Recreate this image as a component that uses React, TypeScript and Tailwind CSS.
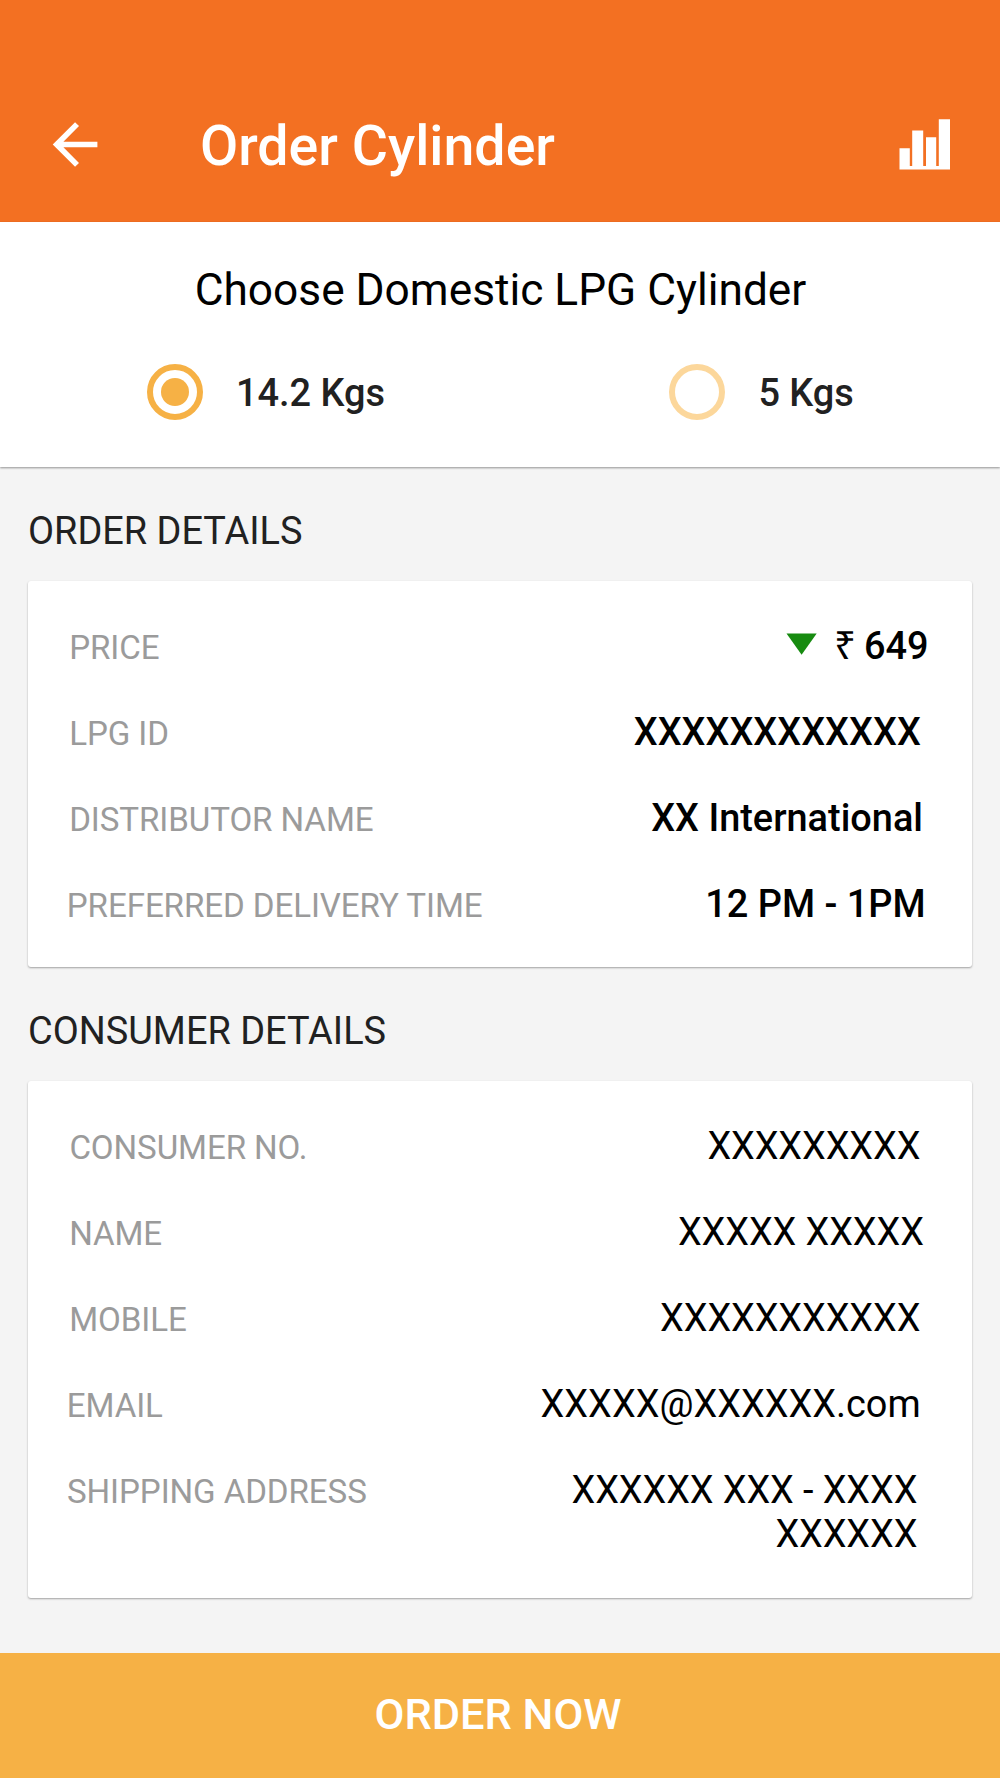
import { useState } from 'react';

const sizes = ['14.2 Kgs', '5 Kgs'];

// the address goes over two lines, everything else is one
const consumerRows = [
  { label: 'CONSUMER NO.', lines: ['XXXXXXXXX'], className: 'pl-[41.4px] pr-[51.7px] tracking-[-0.1px]' },
  { label: 'NAME', lines: ['XXXXX XXXXX'], className: 'pl-[41.2px] pr-[48.2px] tracking-[-0.1px]' },
  { label: 'MOBILE', lines: ['XXXXXXXXXXX'], className: 'pl-[41.2px] pr-[51.7px] tracking-[-0.1px]' },
  { label: 'EMAIL', lines: ['XXXXX@XXXXXX.com'], className: 'pl-[38.8px] pr-[51.4px]' },
  { label: 'SHIPPING ADDRESS', lines: ['XXXXXX XXX - XXXX', 'XXXXXX'], className: 'pl-[39px] pr-[54.7px] tracking-[-0.1px]' },
]

const BackArrow = () => (
  <svg className="w-[67px] h-[67px]" viewBox="-0.2 0 24 24" fill="currentColor">
    <path d="M20 11H7.83l5.59-5.59L12 4l-8 8 8 8 1.41-1.41L7.83 13H20v-2z" />
  </svg>
)

const BarsIcon = () => (
  <svg className="w-[51px] h-[51px]" viewBox="0 0 51 51" fill="currentColor">
    <path d="M.5 29.2h10.3V47h2.4V11.4h11V47H27V18.3h10.2V47h2.6V.3H51v50.3H.5z" />
  </svg>
)

const Row = ({ label, className, children }: { label: string, className: string, children: React.ReactNode }) => {
  return (
    <div className={`flex justify-between h-[86px] ${className}`}>
      <div className="pt-6 text-[33.15px] leading-[43px] tracking-[-0.1px] font-normal text-[#9b9b9b] whitespace-nowrap">{label}</div>
      <div className="pt-[22px] text-right text-[37.9px] leading-[44px] text-black whitespace-nowrap">{children}</div>
    </div>
  )
}

const Card = ({ title, className, children }: { title: string, className: string, children: React.ReactNode }) => {
  return (
    <section className="px-7">
      <h2 className="h-[114px] pt-[42px] text-[37.9px] leading-[44px] text-[#212121]">{title}</h2>
      <div className={`pt-[21px] bg-white rounded-[3px] shadow-[0_1px_2px_rgba(0,0,0,0.34)] ${className}`}>
        {children}
      </div>
    </section>
  )
}

const App = () => {

  const [size, setSize] = useState(sizes[0]);

  return (
    <div className="w-[1000px] h-[1778px] flex flex-col overflow-hidden bg-[#f4f4f4] font-['Roboto',sans-serif]">

      {/* app bar */}
      <header className="h-[222px] shrink-0 pt-[70px] pl-[41px] pr-[50px] flex items-center bg-[#f37022] text-white">
        <div className="-mt-[3px]"><BackArrow /></div>
        <h1 className="ml-[92px] pt-0.5 flex-1 text-[55.5px] leading-[66px] font-medium">Order Cylinder</h1>
        <div className="-mt-[3px]"><BarsIcon /></div>
      </header>

      {/* cylinder size */}
      <section className="h-[245px] shrink-0 pt-[42px] bg-white shadow-[0_1px_2px_rgba(0,0,0,0.4)]">
        <h2 className="pl-px text-center text-[44.25px] leading-[53px] text-black">Choose Domestic LPG Cylinder</h2>
        <div className="flex mt-[47px] pl-[147px]">
          {
            sizes.map((theSize) => {
              const active = theSize == size
              return (
                <div key={theSize} className="w-[522.4px] h-14 shrink-0 flex items-center gap-[33px] cursor-pointer" onClick={() => setSize(theSize)}>
                  <div className={active ? "w-14 h-14 rounded-full border-6 border-[#f6b145] flex items-center justify-center" : "w-14 h-14 rounded-full border-6 border-[#fcd79b]"}>
                    {active && <div className="w-7 h-7 rounded-full bg-[#f6b145]"></div>}
                  </div>
                  <div className="pt-0.5 text-[37.9px] leading-[44px] font-medium text-[#212121]">{theSize}</div>
                </div>
              )
            })
          }
        </div>
      </section>

      {/* order details */}
      <Card title="ORDER DETAILS" className="h-[386px] font-medium">
        <Row label="PRICE" className="pl-[41.2px] pr-[43.5px]">
          <div className="flex">
            <svg className="w-[31px] h-[22px] mt-[9px] mr-[17px]" viewBox="0 0 31 22" fill="#178b10">
              <path d="M.5.4h30.2L15.6 21.8z" />
            </svg>
            <span className="w-[22px] mr-2 font-['Noto_Sans'] font-normal text-[38.6px] leading-[40px]">₹</span>
            <span>649</span>
          </div>
        </Row>
        <Row label="LPG ID" className="pl-[41.2px] pr-[51.2px]">XXXXXXXXXXXX</Row>
        <Row label="DISTRIBUTOR NAME" className="pl-[41.2px] pr-[49px]">XX International</Row>
        <Row label="PREFERRED DELIVERY TIME" className="pl-[38.8px] pr-[46.4px]">12 PM - 1PM</Row>
      </Card>

      {/* consumer details */}
      <Card title="CONSUMER DETAILS" className="h-[517px]">
        {
          consumerRows.map((row) => (
            <Row key={row.label} label={row.label} className={row.className}>
              {row.lines.map((line) => <div key={line}>{line}</div>)}
            </Row>
          ))
        }
      </Card>

      <button className="mt-auto h-[125px] shrink-0 pr-1 pb-0.5 bg-[#f6b145] text-white text-[43.4px] leading-[52px] font-medium cursor-pointer">
        ORDER NOW
      </button>

    </div>
  )
}

export default App
